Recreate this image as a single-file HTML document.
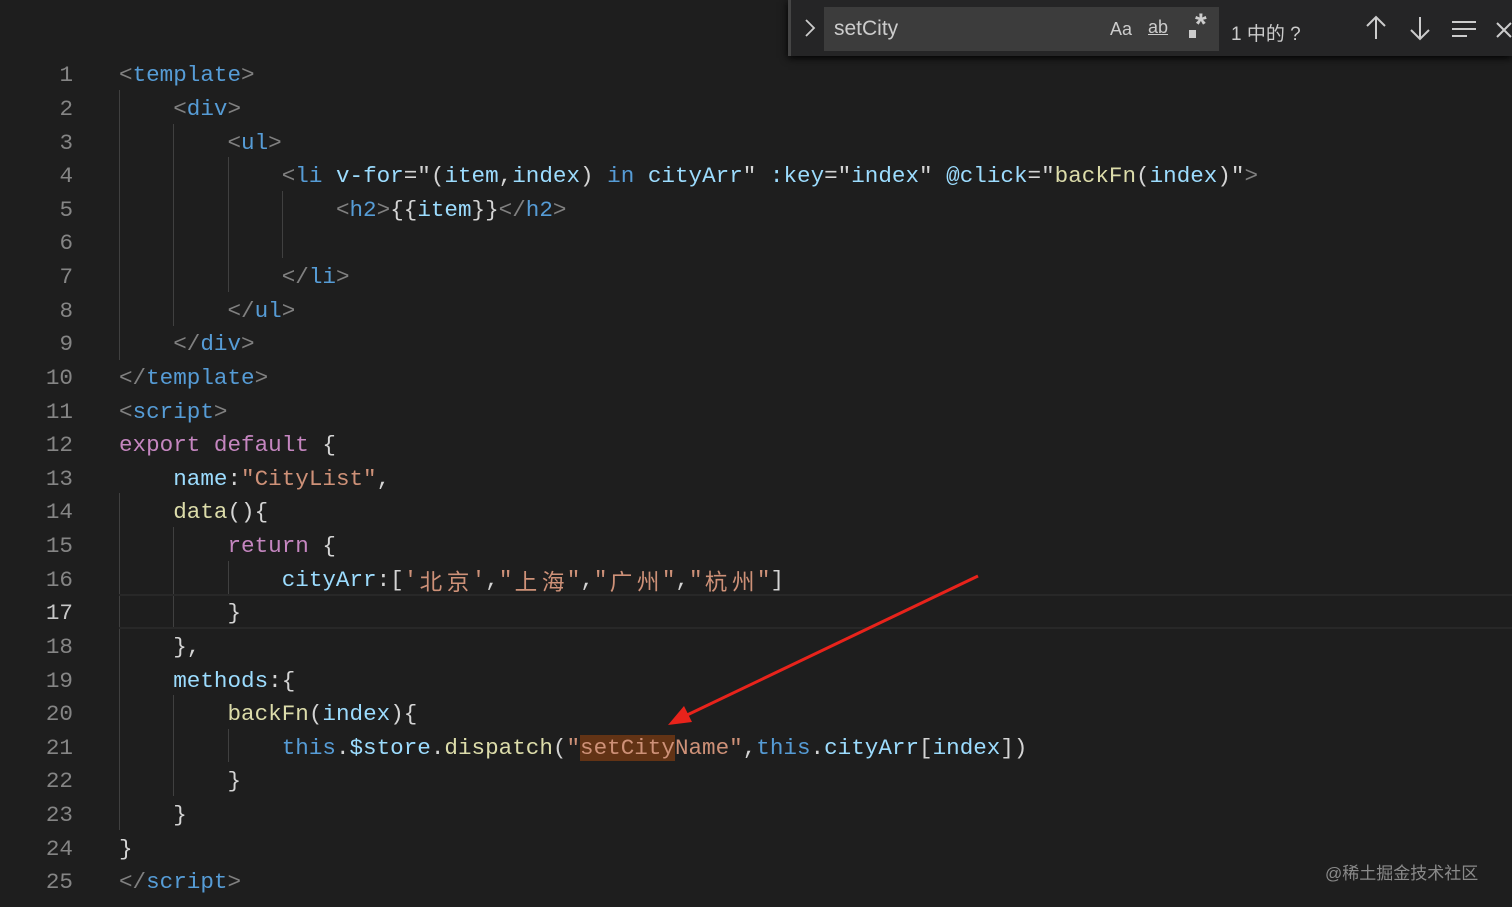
<!DOCTYPE html>
<html><head><meta charset="utf-8"><style>
body{margin:0;width:1512px;height:907px;background:#1e1e1e;overflow:hidden;position:relative;font-family:"Liberation Mono","Noto Sans CJK SC",monospace;}
.ln{position:absolute;left:0;width:73px;text-align:right;font-size:22.6px;color:#858585;line-height:33.6px;height:33.6px;margin-top:3px;}
.ln.cur{color:#c6c6c6;}
.code{position:absolute;left:119px;font-size:22.6px;line-height:33.6px;height:33.6px;color:#d4d4d4;white-space:pre;margin-top:3px;}
.g{position:absolute;width:1px;background:#404040;}
.b{color:#808080}.t{color:#569cd6}.a{color:#9cdcfe}.s{color:#ce9178}.k{color:#c586c0}.f{color:#dcdcaa}
.c{display:inline-block;width:27.2px;text-align:center;font-family:"Noto Sans CJK SC",sans-serif;vertical-align:top;line-height:33.6px;}
.hl{background:#623315;}
#find{position:absolute;left:788px;top:0;width:724px;height:56px;background:#252526;box-shadow:0 2px 8px #000;border-left:3px solid #454545;box-sizing:border-box;font-family:"Liberation Sans","Noto Sans CJK SC",sans-serif;color:#ccc;}
</style></head><body>
<div class="g" style="left:119px;top:90px;height:270px"></div>
<div class="g" style="left:173px;top:124px;height:202px"></div>
<div class="g" style="left:228px;top:157px;height:135px"></div>
<div class="g" style="left:282px;top:191px;height:67px"></div>
<div class="g" style="left:119px;top:493px;height:337px"></div>
<div class="g" style="left:173px;top:527px;height:101px"></div>
<div class="g" style="left:173px;top:695px;height:101px"></div>
<div class="g" style="left:228px;top:561px;height:33px"></div>
<div class="g" style="left:228px;top:729px;height:33px"></div>
<div style="position:absolute;left:119px;right:0;top:594px;height:31px;border-top:2px solid #282828;border-bottom:2px solid #282828"></div>

<div class="ln" style="top:56.2px">1</div><div class="code" style="top:56.2px"><span class="b">&lt;</span><span class="t">template</span><span class="b">&gt;</span></div>
<div class="ln" style="top:89.8px">2</div><div class="code" style="top:89.8px">    <span class="b">&lt;</span><span class="t">div</span><span class="b">&gt;</span></div>
<div class="ln" style="top:123.5px">3</div><div class="code" style="top:123.5px">        <span class="b">&lt;</span><span class="t">ul</span><span class="b">&gt;</span></div>
<div class="ln" style="top:157.1px">4</div><div class="code" style="top:157.1px">            <span class="b">&lt;</span><span class="t">li</span> <span class="a">v-for</span>="(<span class="a">item</span>,<span class="a">index</span>) <span class="t">in</span> <span class="a">cityArr</span>" <span class="a">:key</span>="<span class="a">index</span>" <span class="a">@click</span>="<span class="f">backFn</span>(<span class="a">index</span>)"<span class="b">&gt;</span></div>
<div class="ln" style="top:190.7px">5</div><div class="code" style="top:190.7px">                <span class="b">&lt;</span><span class="t">h2</span><span class="b">&gt;</span>{{<span class="a">item</span>}}<span class="b">&lt;/</span><span class="t">h2</span><span class="b">&gt;</span></div>
<div class="ln" style="top:224.4px">6</div>
<div class="ln" style="top:258.0px">7</div><div class="code" style="top:258.0px">            <span class="b">&lt;/</span><span class="t">li</span><span class="b">&gt;</span></div>
<div class="ln" style="top:291.6px">8</div><div class="code" style="top:291.6px">        <span class="b">&lt;/</span><span class="t">ul</span><span class="b">&gt;</span></div>
<div class="ln" style="top:325.2px">9</div><div class="code" style="top:325.2px">    <span class="b">&lt;/</span><span class="t">div</span><span class="b">&gt;</span></div>
<div class="ln" style="top:358.9px">10</div><div class="code" style="top:358.9px"><span class="b">&lt;/</span><span class="t">template</span><span class="b">&gt;</span></div>
<div class="ln" style="top:392.5px">11</div><div class="code" style="top:392.5px"><span class="b">&lt;</span><span class="t">script</span><span class="b">&gt;</span></div>
<div class="ln" style="top:426.1px">12</div><div class="code" style="top:426.1px"><span class="k">export</span> <span class="k">default</span> {</div>
<div class="ln" style="top:459.8px">13</div><div class="code" style="top:459.8px">    <span class="a">name</span>:<span class="s">"CityList"</span>,</div>
<div class="ln" style="top:493.4px">14</div><div class="code" style="top:493.4px">    <span class="f">data</span>(){</div>
<div class="ln" style="top:527.0px">15</div><div class="code" style="top:527.0px">        <span class="k">return</span> {</div>
<div class="ln" style="top:560.7px">16</div><div class="code" style="top:560.7px">            <span class="a">cityArr</span>:[<span class="s">'<span class="c">北</span><span class="c">京</span>'</span>,<span class="s">"<span class="c">上</span><span class="c">海</span>"</span>,<span class="s">"<span class="c">广</span><span class="c">州</span>"</span>,<span class="s">"<span class="c">杭</span><span class="c">州</span>"</span>]</div>
<div class="ln cur" style="top:594.3px">17</div><div class="code" style="top:594.3px">        }</div>
<div class="ln" style="top:627.9px">18</div><div class="code" style="top:627.9px">    },</div>
<div class="ln" style="top:661.6px">19</div><div class="code" style="top:661.6px">    <span class="a">methods</span>:{</div>
<div class="ln" style="top:695.2px">20</div><div class="code" style="top:695.2px">        <span class="f">backFn</span>(<span class="a">index</span>){</div>
<div class="ln" style="top:728.8px">21</div><div class="code" style="top:728.8px">            <span class="t">this</span>.<span class="a">$store</span>.<span class="f">dispatch</span>(<span class="s">"<span class="hl">setCity</span>Name"</span>,<span class="t">this</span>.<span class="a">cityArr</span>[<span class="a">index</span>])</div>
<div class="ln" style="top:762.4px">22</div><div class="code" style="top:762.4px">        }</div>
<div class="ln" style="top:796.1px">23</div><div class="code" style="top:796.1px">    }</div>
<div class="ln" style="top:829.7px">24</div><div class="code" style="top:829.7px">}</div>
<div class="ln" style="top:863.3px">25</div><div class="code" style="top:863.3px"><span class="b">&lt;/</span><span class="t">script</span><span class="b">&gt;</span></div>

<svg style="position:absolute;left:0;top:0" width="1512" height="907">
<line x1="978" y1="576" x2="685" y2="716" stroke="#e8231b" stroke-width="3"/>
<polygon points="668,725 684,706 692,722" fill="#e8231b"/>
</svg>
<div id="find">
<svg style="position:absolute;left:13px;top:18px" width="12" height="20"><path d="M2 2 L10 10 L2 18" stroke="#ccc" stroke-width="1.8" fill="none"/></svg>
<div style="position:absolute;left:33px;top:7px;width:395px;height:44px;background:#3c3c3c;"></div>
<div style="position:absolute;left:43px;top:17px;font-size:21px;color:#ccc">setCity</div>
<div style="position:absolute;left:319px;top:19px;font-size:18px">Aa</div>
<div style="position:absolute;left:357px;top:17px;font-size:18px;text-decoration:underline">ab</div>
<div style="position:absolute;left:398px;top:30px;width:7px;height:8px;background:#ccc"></div>
<div style="position:absolute;left:404px;top:8px;font-size:30px;font-weight:bold">*</div>
<div style="position:absolute;left:440px;top:19px;font-size:19px">1 中的 ?</div>
<svg style="position:absolute;left:572px;top:15px" width="130" height="28">
<path d="M13 2 V24 M4 11 L13 2 L22 11" stroke="#ccc" stroke-width="2" fill="none"/>
<path d="M57 2 V24 M48 15 L57 24 L66 15" stroke="#ccc" stroke-width="2" fill="none"/>
<path d="M89 7 H113 M89 14 H113 M89 21 H104" stroke="#ccc" stroke-width="2" fill="none"/>
</svg>
<svg style="position:absolute;left:704px;top:21px" width="20" height="20"><path d="M2 2 L16 16 M16 2 L2 16" stroke="#ccc" stroke-width="2"/></svg>
</div>
<div style="position:absolute;left:1325px;top:859px;font-family:'Liberation Sans','Noto Sans CJK SC',sans-serif;font-size:17px;color:#8a8a8a">@稀土掘金技术社区</div>
</body></html>
